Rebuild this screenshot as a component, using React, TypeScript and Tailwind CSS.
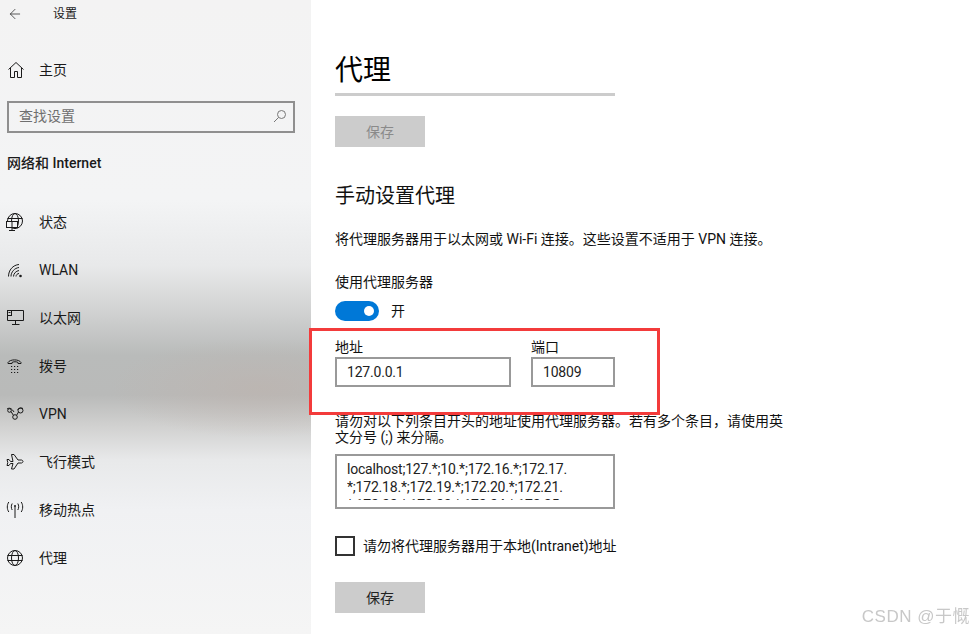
import { ArrowLeft } from 'lucide-react'
import React from 'react'

const font = "font-['Roboto','Noto_Sans_CJK_SC',sans-serif]"

const iconProps = {
  width: 18,
  height: 18,
  viewBox: '0 0 18 18',
  fill: 'none',
  stroke: '#1a1a1a',
  strokeWidth: 1,
} as const

const HomeIcon = () => (
  <svg {...iconProps}>
    <path d="M1.500 8.500 9 1.500l7.500 7M3.500 7v9.500h4v-6h3v6h4V7" />
  </svg>
)

const StatusIcon = () => (
  <svg {...iconProps}>
    <circle cx="9" cy="8" r="7.500" />
    <ellipse cx="9" cy="8" rx="3.500" ry="7.500" />
    <path d="M1.500 5.500h15" />
    <rect x="0.500" y="8.500" width="11" height="6" fill="#f3f4f5" />
    <path d="M6 14.500v3M3 17.500h6M6 8.500v6" />
  </svg>
)

const WifiIcon = () => (
  <svg {...iconProps}>
    <path d="M2.500 15.500C2.500 9 7 4 13 3.500M5 15.500C5 11 8.500 7 13 6.500M7.500 15.500c0-3 2.500-5.500 5.500-6M10 15.500c0-1.500 1.500-3 3-3" />
    <circle cx="14.500" cy="15" r="1.300" fill="#1a1a1a" stroke="none" />
  </svg>
)

const EthernetIcon = () => (
  <svg {...iconProps}>
    <path d="M4.500 1.500h13v10h-16V7M9.500 11.500v4M6 15.500h7.500" />
    <rect x="1.500" y="1.500" width="4" height="5" fill="none" />
    <path d="M2.500 3.500h2" />
  </svg>
)

const DialIcon = () => (
  <svg {...iconProps}>
    <path d="M2 6.500V5.500C4 2 13 2 15 5.500v1h-3V5.500c-1-1-5-1-6 0v1z" />
    <path d="M5 9.500h1.200M8 9.500h1.200M11 9.500h1.200M5 12.500h1.200M8 12.500h1.200M11 12.500h1.200M5 15.500h1.200M8 15.500h1.200M11 15.500h1.200" />
  </svg>
)

const VpnIcon = () => (
  <svg {...iconProps}>
    <circle cx="3.500" cy="5.500" r="1.800" />
    <circle cx="14.500" cy="5.500" r="2.500" />
    <circle cx="9" cy="12" r="2.300" />
    <path d="M5 6.500 7.500 10.500M12.500 7l-2 3.500M1 4c3-2 5 0 7 3M17 3.500c-2-1-4-.5-5.500 1" />
  </svg>
)

const PlaneIcon = () => (
  <svg {...iconProps}>
    <path d="M1 6.500h2l1.500 2H7L5.500 1.500h2.500L12 7h3.500c2 .5 2 2.500 0 3H12l-4 6H5.500L7 10.500H4.500L3 12.500H1l.8-3z" />
  </svg>
)

const HotspotIcon = () => (
  <svg {...iconProps}>
    <path d="M9 5.500V17" />
    <circle cx="9" cy="5" r="1" fill="#1a1a1a" stroke="none" />
    <path d="M6.200 2.500c-1.200 2-1.200 4.500 0 6.500M11.800 2.500c1.200 2 1.200 4.500 0 6.500M2.800 1C.8 4 .8 8 2.800 11M15.200 1c2 3 2 7 0 10" />
  </svg>
)

const GlobeIcon = () => (
  <svg {...iconProps}>
    <circle cx="9" cy="9" r="7.500" />
    <ellipse cx="9" cy="9" rx="3.500" ry="7.500" />
    <path d="M1.500 6.500h15M1.500 11.500h15" />
  </svg>
)

const SearchIcon = () => (
  <svg width="14" height="14" viewBox="0 0 14 14" fill="none" stroke="#777" strokeWidth="1">
    <circle cx="8.500" cy="5.500" r="4" />
    <path d="M5.500 8.500 1 13" />
  </svg>
)

const navItems = [
  { label: '状态', icon: <StatusIcon /> },
  { label: 'WLAN', icon: <WifiIcon /> },
  { label: '以太网', icon: <EthernetIcon /> },
  { label: '拨号', icon: <DialIcon /> },
  { label: 'VPN', icon: <VpnIcon /> },
  { label: '飞行模式', icon: <PlaneIcon /> },
  { label: '移动热点', icon: <HotspotIcon /> },
  { label: '代理', icon: <GlobeIcon /> },
]

const Sidebar = () => (
  <aside className="flex h-full w-[311px] shrink-0 flex-col bg-[radial-gradient(ellipse_150px_50px_at_260px_388px,rgba(190,178,172,0.55),rgba(190,178,172,0)),linear-gradient(to_bottom,#f3f3f3_0px,#f3f4f5_200px,#e8e9ea_265px,#cfd0d0_315px,#b9bbba_355px,#b9bab9_395px,#d0d0cf_425px,#e8e9ea_460px,#f0f1f3_510px,#f5f5f5_634px)] text-[#1a1a1a]">
    <div className="flex h-[27px] items-center pl-[7px]">
      <ArrowLeft size={16} strokeWidth={1.1} color="#222" />
      <span className="ml-[30px] text-xs">设置</span>
    </div>
    <div className="mt-[29px] flex h-[28px] items-center pl-[7px]">
      <HomeIcon />
      <span className="ml-[14px] text-sm">主页</span>
    </div>
    <div className="mx-[7px] mt-[17px] flex h-[32px] w-[288px] items-center justify-between border-2 border-[#8f8f8f] pb-[2px] pl-[10px] pr-[6px]">
      <span className="text-sm text-[#6f6f6f]">查找设置</span>
      <SearchIcon />
    </div>
    <div className="mt-[20px] h-[20px] pl-[7px] text-sm leading-[20px] font-medium">网络和 Internet</div>
    <nav className="mt-[25px] flex flex-col">
      {navItems.map((item) => (
        <div key={item.label} className="flex h-[48px] items-center pl-[6px]">
          {item.icon}
          <span className="ml-[15px] text-sm">{item.label}</span>
        </div>
      ))}
    </nav>
  </aside>
)

const Field = ({ label, value, width }: { label: string; value: string; width: string }) => (
  <div className={`flex flex-col ${width}`}>
    <span className="h-[20px] text-sm leading-[20px] text-[#111]">{label}</span>
    <div className="flex h-[30px] items-center border-2 border-[#999] pl-[10px] text-sm tracking-[-0.2px] text-[#222]">{value}</div>
  </div>
)

const Main = () => (
  <main className="flex min-w-0 flex-1 flex-col pl-[24px] text-[#111]">
    <h1 className="mt-[50px] h-[42px] text-[28px] leading-[42px] text-black">代理</h1>
    <div className="mt-[1px] h-[3px] w-[280px] bg-[#cccccc]" />
    <button className="mt-[20px] h-[31px] w-[90px] bg-[#cccccc] text-sm text-[#8a8a8a]">保存</button>
    <h2 className="mt-[34px] h-[30px] text-xl leading-[30px]">手动设置代理</h2>
    <p className="mt-[18px] h-[20px] whitespace-nowrap text-sm leading-[20px]">将代理服务器用于以太网或 Wi-Fi 连接。这些设置不适用于 VPN 连接。</p>
    <p className="mt-[23px] h-[20px] text-sm leading-[20px]">使用代理服务器</p>
    <div className="mt-[9px] flex h-[20px] items-center">
      <span className="flex h-[20px] w-[44px] items-center justify-end rounded-full bg-[#0078d7] pr-[5px]">
        <span className="h-[10px] w-[10px] rounded-full bg-white" />
      </span>
      <span className="ml-[12px] text-sm">开</span>
    </div>
    <div className="mt-[16px] flex gap-[20px]">
      <Field label="地址" value="127.0.0.1" width="w-[176px]" />
      <Field label="端口" value="10809" width="w-[84px]" />
    </div>
    <p className="mt-[26px] w-[450px] text-sm leading-[16px]">请勿对以下列条目开头的地址使用代理服务器。若有多个条目，请使用英文分号 (;) 来分隔。</p>
    <div className="mt-[9px] h-[55px] w-[280px] overflow-hidden border-2 border-[#999] pt-[4px] pl-[10px] pr-[4px] text-sm leading-[18px] tracking-[-0.2px] text-[#222]">
      <div className="h-[40px] overflow-hidden break-all">
        localhost;127.*;10.*;172.16.*;172.17.
        <br />
        *;172.18.*;172.19.*;172.20.*;172.21.
        <br />
        *;172.22.*;172.23.*;172.24.*;172.25.
      </div>
    </div>
    <label className="mt-[27px] flex h-[20px] items-center">
      <span className="h-[20px] w-[20px] border-2 border-[#333]" />
      <span className="ml-[8px] text-sm">请勿将代理服务器用于本地(Intranet)地址</span>
    </label>
    <button className="mt-[26px] h-[31px] w-[90px] bg-[#cccccc] text-sm text-[#222]">保存</button>
  </main>
)

export default function App() {
  return (
    <div className={`relative flex h-[634px] w-[975px] overflow-hidden bg-white ${font}`}>
      <Sidebar />
      <Main />
      {/* annotation drawn over the screenshot */}
      <div className="absolute left-[309px] top-[328px] h-[87px] w-[351px] border-[3px] border-[#f33b3b]" />
      <div className="absolute right-[5px] top-[604px] font-['Liberation_Sans','Noto_Sans_CJK_SC',sans-serif] text-[17px] tracking-[0.5px] text-[#c8c8c8] blur-[0.4px]">CSDN @于慨</div>
    </div>
  )
}
